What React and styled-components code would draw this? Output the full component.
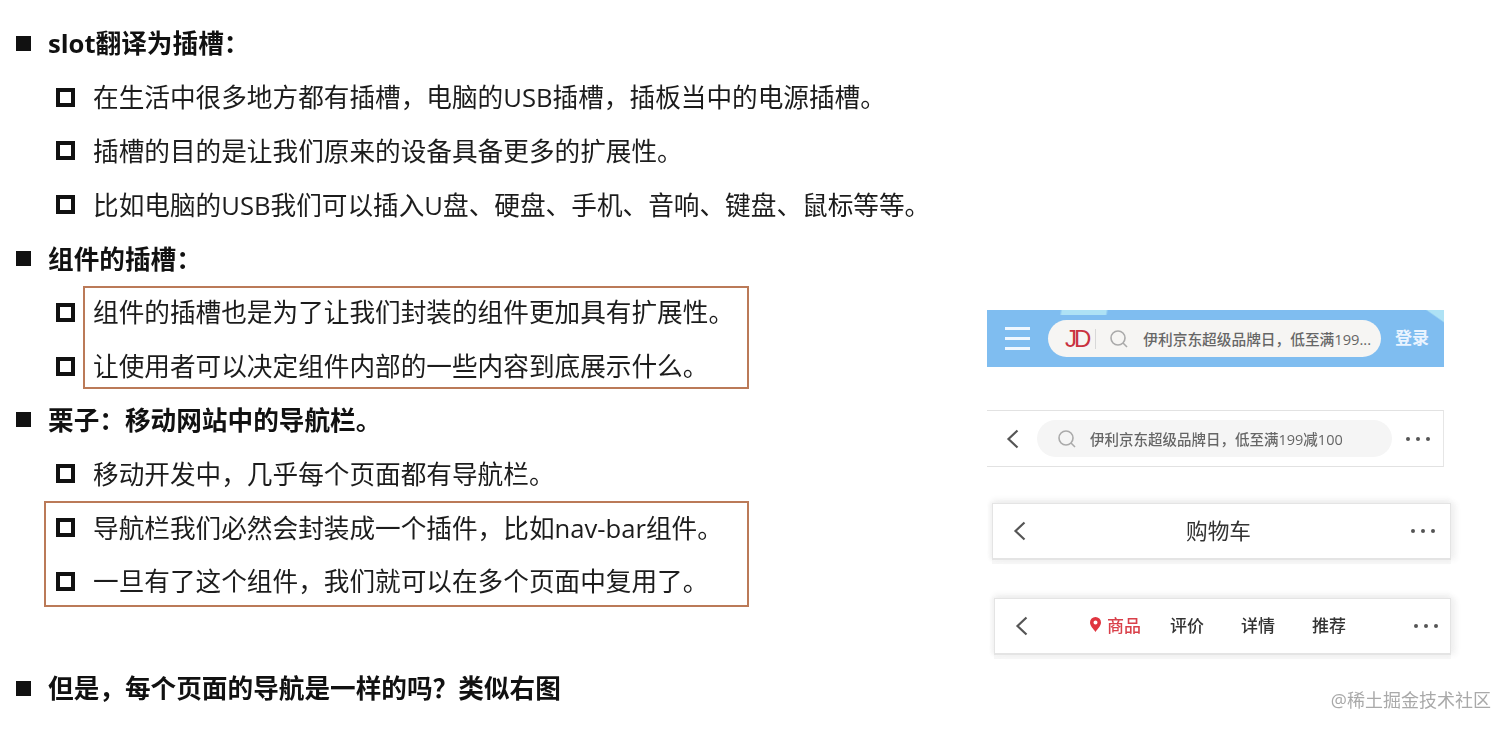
import React from 'react'
import styled, { createGlobalStyle } from 'styled-components'

const GlobalStyle = createGlobalStyle`
  html, body {
    margin: 0;
    padding: 0;
    background: #fff;
  }
  body {
    font-family: "Open Sans", "Noto Sans CJK SC", sans-serif;
    color: #1a1a1a;
  }
`

const Page = styled.div`
  position: relative;
  width: 1512px;
  height: 731px;
  overflow: hidden;
  display: flex;
  background: #fff;
`

const Outline = styled.div`
  width: 987px;
  padding: 16.5px 0 0 16px;
  box-sizing: border-box;
  filter: blur(0.3px);
`

const HeadRow = styled.div`
  display: flex;
  align-items: center;
  height: 53.8px;
  gap: 17px;
  font-size: 25.65px;
  font-weight: 700;
  color: #111;
  margin-top: ${p => p.$gap || 0}px;
`

const HeadMark = styled.span`
  width: 15px;
  height: 15px;
  background: #111;
  flex: none;
`

const RowText = styled.span`
  padding-bottom: 2px;
`

const SubRow = styled.div`
  display: flex;
  align-items: center;
  height: 53.8px;
  gap: 18px;
  padding-left: 40px;
  font-size: 25.65px;
  color: #1c1c1c;
  white-space: nowrap;
`

const SubMark = styled.span`
  width: 19px;
  height: 19px;
  border: 4px solid #111;
  box-sizing: border-box;
  flex: none;
`

const Group = styled.div`
  position: relative;
  &::after {
    content: "";
    position: absolute;
    left: ${p => p.$left}px;
    width: ${p => p.$width}px;
    top: 0.5px;
    bottom: ${p => p.$bottom}px;
    border: 2px solid #bb7a58;
    box-sizing: border-box;
  }
`

const Shots = styled.div`
  flex: 1;
  padding-top: 310px;
  filter: blur(0.4px);
`

const Shot = styled.div`
  display: flex;
  align-items: center;
  box-sizing: border-box;
  margin-left: ${p => p.$left || 0}px;
  margin-top: ${p => p.$top || 0}px;
  width: ${p => p.$width}px;
  height: ${p => p.$height}px;
`

const JdBar = styled(Shot)`
  padding: 0 0 0 18px;
  background:
    linear-gradient(100deg, transparent 16%, #aee2f5 16.5%, #aee2f5 26%, transparent 26.5%) top / 100% 5px no-repeat,
    linear-gradient(215deg, #aee2f5 3%, transparent 3.5%),
    #7fbdf0;
`

const Burger = styled.div`
  display: flex;
  flex-direction: column;
  gap: 7px;
  width: 25px;
  flex: none;
  span {
    height: 3px;
    background: #eef7ff;
  }
`

const Pill = styled.div`
  display: flex;
  align-items: center;
  background: ${p => p.$bg};
  height: 37px;
  border-radius: 19px;
  margin-left: ${p => p.$left}px;
  width: ${p => p.$width}px;
  padding-left: ${p => p.$pad}px;
  box-sizing: border-box;
  color: #666;
  font-size: ${p => p.$size}px;
  font-weight: 500;
  white-space: nowrap;
  flex: none;
`

const JdLogo = styled.span`
  color: #c9323f;
  font-family: "Liberation Sans", sans-serif;
  font-size: 24px;
  letter-spacing: -3px;
  padding-right: 7px;
  border-right: 1px solid #d8d8d8;
  line-height: 20px;
  margin-right: 13px;
`

const PillText = styled.span`
  margin-left: ${p => p.$left}px;
`

const Login = styled.span`
  color: #eaf4ff;
  font-size: 17px;
  font-weight: 700;
  margin-left: 14px;
  padding-bottom: 5px;
`

const PlainBar = styled(Shot)`
  border-top: 1px solid #e2e2e2;
  border-bottom: 1px solid #e2e2e2;
  border-right: 1px solid #e6e6e6;
  padding-left: 19px;
`

const CardBar = styled(Shot)`
  position: relative;
  border: 1px solid #e4e4e4;
  border-bottom-width: 2px;
  box-shadow: 0 -3px 6px #eee, 5px 0 6px #f2f2f2, -2px 0 4px #f2f2f2, 0 4px 0 #f6f6f6;
  padding: 0 ${p => p.$right}px 0 20px;
  background: #fff;
`

const CardTitle = styled.span`
  flex: 1;
  text-align: center;
  font-size: 21.7px;
  color: #333;
  padding-bottom: 4px;
`

const Tabs = styled.div`
  flex: 1;
  display: flex;
  gap: 37px;
  margin-left: 62px;
  padding-bottom: 3px;
  font-size: 17px;
  font-weight: 500;
  color: #333;
`

const Tab = styled.span`
  display: flex;
  align-items: center;
  gap: 6px;
  margin-right: ${p => (p.$active ? -8 : 0)}px;
  color: ${p => (p.$active ? '#d9404a' : '#333')};
`

const Dots = styled.div`
  display: flex;
  gap: 6px;
  flex: none;
  margin-left: ${p => p.$left || 0}px;
  span {
    width: 4px;
    height: 4px;
    border-radius: 50%;
    background: #555;
  }
`

const Watermark = styled.div`
  position: absolute;
  right: 21px;
  top: 688px;
  font-size: 18px;
  line-height: 24px;
  color: #a9a9a9;
  white-space: nowrap;
`

const Back = () => (
  <svg width="13" height="20" viewBox="0 0 13 20" fill="none" stroke="#555" strokeWidth="2.2" style={{ flex: 'none' }}>
    <path d="M11.5 1.5 L2.5 10 L11.5 18.5" />
  </svg>
)

const Search = () => (
  <svg width="20" height="20" viewBox="0 0 20 20" fill="none" stroke="#aaa" strokeWidth="1.6" style={{ flex: 'none' }}>
    <circle cx="9" cy="9" r="7" />
    <path d="M14 14 L18 18" />
  </svg>
)

const Pin = () => (
  <svg width="11" height="15" viewBox="0 0 11 15" style={{ flex: 'none' }}>
    <path fillRule="evenodd" fill="#e0353f" d="M5.5 0 A5.5 5.5 0 0 1 11 5.5 C11 9 7.5 12 5.5 15 C3.5 12 0 9 0 5.5 A5.5 5.5 0 0 1 5.5 0 Z M5.5 3.5 A2 2 0 1 0 5.5 7.5 A2 2 0 1 0 5.5 3.5 Z" />
  </svg>
)

const ThreeDots = ({ left }) => (
  <Dots $left={left}>
    <span />
    <span />
    <span />
  </Dots>
)

const Head = ({ children, gap }) => (
  <HeadRow $gap={gap}>
    <HeadMark />
    <RowText>{children}</RowText>
  </HeadRow>
)

const Sub = ({ children }) => (
  <SubRow>
    <SubMark />
    <RowText>{children}</RowText>
  </SubRow>
)

export default function App() {
  return (
    <Page>
      <GlobalStyle />
      <Outline>
        <Head>slot翻译为插槽：</Head>
        <Sub>在生活中很多地方都有插槽，电脑的USB插槽，插板当中的电源插槽。</Sub>
        <Sub>插槽的目的是让我们原来的设备具备更多的扩展性。</Sub>
        <Sub>比如电脑的USB我们可以插入U盘、硬盘、手机、音响、键盘、鼠标等等。</Sub>
        <Head>组件的插槽：</Head>
        <Group $left={67} $width={666} $bottom={3.6}>
          <Sub>组件的插槽也是为了让我们封装的组件更加具有扩展性。</Sub>
          <Sub>让使用者可以决定组件内部的一些内容到底展示什么。</Sub>
        </Group>
        <Head>栗子：移动网站中的导航栏。</Head>
        <Sub>移动开发中，几乎每个页面都有导航栏。</Sub>
        <Group $left={28} $width={705} $bottom={1.6}>
          <Sub>导航栏我们必然会封装成一个插件，比如nav-bar组件。</Sub>
          <Sub>一旦有了这个组件，我们就可以在多个页面中复用了。</Sub>
        </Group>
        <Head gap={53.3}>但是，每个页面的导航是一样的吗？类似右图</Head>
      </Outline>

      <Shots>
        <JdBar $width={457} $height={57}>
          <Burger>
            <span />
            <span />
            <span />
          </Burger>
          <Pill $bg="#f6f5f3" $left={18} $width={333} $pad={17} $size={14.7}>
            <JdLogo>JD</JdLogo>
            <Search />
            <PillText $left={14}>伊利京东超级品牌日，低至满199...</PillText>
          </Pill>
          <Login>登录</Login>
        </JdBar>

        <PlainBar $width={457} $height={57} $top={43}>
          <Back />
          <Pill $bg="#f5f5f5" $left={18} $width={355} $pad={20} $size={14.5}>
            <Search />
            <PillText $left={13}>伊利京东超级品牌日，低至满199减100</PillText>
          </Pill>
          <ThreeDots left={14} />
        </PlainBar>

        <CardBar $width={459} $height={57} $top={36} $left={5} $right={15}>
          <Back />
          <CardTitle>购物车</CardTitle>
          <ThreeDots />
        </CardBar>

        <CardBar $width={457} $height={57} $top={38} $left={7} $right={12}>
          <Back />
          <Tabs>
            <Tab $active>
              <Pin />
              商品
            </Tab>
            <Tab>评价</Tab>
            <Tab>详情</Tab>
            <Tab>推荐</Tab>
          </Tabs>
          <ThreeDots />
        </CardBar>
      </Shots>

      <Watermark>@稀土掘金技术社区</Watermark>
    </Page>
  )
}
